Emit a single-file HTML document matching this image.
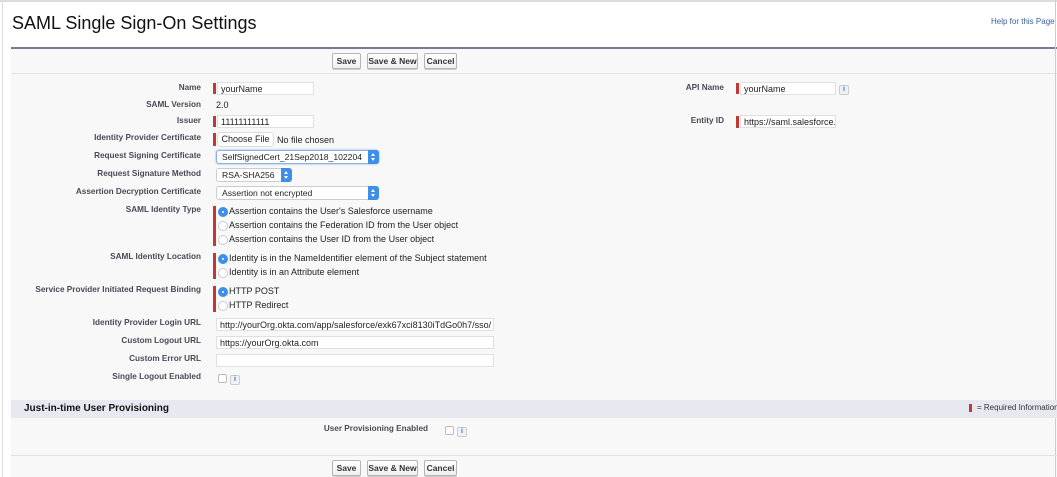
<!DOCTYPE html>
<html><head><meta charset="utf-8"><style>
*{box-sizing:border-box;margin:0;padding:0}
body{width:1057px;height:477px;position:relative;overflow:hidden;background:#fff;font-family:"Liberation Sans",Arial,sans-serif;color:#222}
.a{position:absolute}
.lbl{position:absolute;right:856px;font-size:8.2px;font-weight:bold;color:#4a4a56;white-space:nowrap;text-align:right}
.val{position:absolute;font-size:9px;color:#222;white-space:nowrap}
.inp{position:absolute;height:13px;background:#fff;border:1px solid #e0e0e0;font-size:9px;padding:1px 3px;line-height:10px;white-space:nowrap;overflow:hidden}
.req{position:absolute;width:3px;background:#c23934}
.btn{position:absolute;height:16px;border:1px solid #b5b5b5;border-radius:2px;background:linear-gradient(#fff,#f0f0f0);font-size:8.5px;font-weight:bold;color:#333;text-align:center;line-height:14px;box-shadow:0 1px 0 #ccc}
.sel{position:absolute;height:14px;background:#fff;border:1px solid #ccc;border-radius:3px;font-size:8.6px;padding:0 5px;line-height:12px;white-space:nowrap;overflow:visible}
.sel i{position:absolute;right:-1px;top:-1px;width:11px;height:14px;background:#3d8fe9;border-radius:0 3px 3px 0}
.sel i:before{content:"";position:absolute;left:3px;top:3px;border-left:2.5px solid transparent;border-right:2.5px solid transparent;border-bottom:3px solid #fff}
.sel i:after{content:"";position:absolute;left:3px;top:8px;border-left:2.5px solid transparent;border-right:2.5px solid transparent;border-top:3px solid #fff}
.rad{position:absolute;width:10px;height:10px;border-radius:50%;border:1px solid #ccc;background:#fff}
.rad.on{background:#3d8fe9;border-color:#3d8fe9}
.rad.on:after{content:"";position:absolute;left:3px;top:3px;width:2px;height:2px;border-radius:50%;background:#fff}
.rt{position:absolute;font-size:9px;color:#222;white-space:nowrap}
.cb{position:absolute;width:9px;height:9px;border:1px solid #bbb;border-radius:2px;background:#fff}
.info{position:absolute;width:10px;height:10px;border:1px solid #ccc;border-radius:2px;background:#eef2f8;font-size:7px;color:#3a6fb0;text-align:center;line-height:8px;font-weight:bold}
</style></head><body>
<div class="a" style="left:0;top:0;width:1057px;height:2px;background:#ddd"></div>
<div class="a" style="left:2px;top:0;width:1px;height:477px;background:#ddd"></div>
<div class="a" style="left:12px;top:13px;font-size:18px;color:#111">SAML Single Sign-On Settings</div>
<div class="a" style="left:991px;top:17px;font-size:8px;color:#3a5f9e">Help for this Page</div>
<div class="a" style="left:11px;top:47px;width:1046px;height:430px;background:#f8f8f8;border-top:2px solid #7a7a96"></div>
<div class="a" style="left:11px;top:73px;width:1046px;height:1px;background:#e2e2e2"></div>
<div class="a" style="left:1055px;top:0;width:1px;height:477px;background:#ccc"></div>
<div class="btn" style="left:332px;top:53px;width:29px">Save</div>
<div class="btn" style="left:367px;top:53px;width:51px">Save &amp; New</div>
<div class="btn" style="left:424px;top:53px;width:33px">Cancel</div>

<div class="lbl" style="top:83px">Name</div>
<div class="req" style="left:213px;top:83px;height:11px"></div><div class="inp" style="left:217px;top:82px;width:97px">yourName</div>
<div class="lbl" style="top:100px">SAML Version</div><div class="val" style="left:216px;top:100px">2.0</div>
<div class="lbl" style="top:116px">Issuer</div>
<div class="req" style="left:213px;top:116px;height:11px"></div><div class="inp" style="left:217px;top:115px;width:97px">11111111111</div>
<div class="lbl" style="top:133px">Identity Provider Certificate</div>
<div class="req" style="left:213px;top:133px;height:13px"></div>
<div class="a" style="left:217px;top:132px;width:57px;height:15px;background:#fff;border:1px solid #ddd;border-radius:3px;font-size:9px;line-height:13px;text-align:center">Choose File</div>
<div class="val" style="left:277px;top:135px">No file chosen</div>
<div class="lbl" style="top:151px">Request Signing Certificate</div>
<div class="sel" style="left:216px;top:150px;width:163px;border-color:#8ab0e6;box-shadow:0 0 2px #8ab0e6">SelfSignedCert_21Sep2018_102204<i></i></div>
<div class="lbl" style="top:169px">Request Signature Method</div>
<div class="sel" style="left:216px;top:168px;width:76px">RSA-SHA256<i></i></div>
<div class="lbl" style="top:187px">Assertion Decryption Certificate</div>
<div class="sel" style="left:216px;top:186px;width:163px">Assertion not encrypted<i></i></div>

<div class="lbl" style="top:205px">SAML Identity Type</div>
<div class="req" style="left:213px;top:206px;height:40px"></div>
<div class="rad on" style="left:218px;top:207px"></div><div class="rt" style="left:229px;top:206px">Assertion contains the User's Salesforce username</div>
<div class="rad" style="left:218px;top:221px"></div><div class="rt" style="left:229px;top:220px">Assertion contains the Federation ID from the User object</div>
<div class="rad" style="left:218px;top:235px"></div><div class="rt" style="left:229px;top:234px">Assertion contains the User ID from the User object</div>
<div class="lbl" style="top:252px">SAML Identity Location</div>
<div class="req" style="left:213px;top:253px;height:26px"></div>
<div class="rad on" style="left:218px;top:254px"></div><div class="rt" style="left:229px;top:253px">Identity is in the NameIdentifier element of the Subject statement</div>
<div class="rad" style="left:218px;top:268px"></div><div class="rt" style="left:229px;top:267px">Identity is in an Attribute element</div>
<div class="lbl" style="top:285px">Service Provider Initiated Request Binding</div>
<div class="req" style="left:213px;top:286px;height:26px"></div>
<div class="rad on" style="left:218px;top:287px"></div><div class="rt" style="left:229px;top:286px">HTTP POST</div>
<div class="rad" style="left:218px;top:301px"></div><div class="rt" style="left:229px;top:300px">HTTP Redirect</div>

<div class="lbl" style="top:318px">Identity Provider Login URL</div>
<div class="inp" style="left:216px;top:318px;width:278px">http://yourOrg.okta.com/app/salesforce/exk67xci8130iTdGo0h7/sso/</div>
<div class="lbl" style="top:336px">Custom Logout URL</div>
<div class="inp" style="left:216px;top:336px;width:278px">https://yourOrg.okta.com</div>
<div class="lbl" style="top:354px">Custom Error URL</div>
<div class="inp" style="left:216px;top:354px;width:278px"></div>
<div class="lbl" style="top:372px">Single Logout Enabled</div>
<div class="cb" style="left:218px;top:374px"></div><div class="info" style="left:230px;top:375px">i</div>

<div class="lbl" style="left:600px;right:auto;width:124px;top:83px">API Name</div>
<div class="req" style="left:736px;top:83px;height:11px"></div><div class="inp" style="left:740px;top:82px;width:96px">yourName</div>
<div class="info" style="left:839px;top:85px">i</div>
<div class="lbl" style="left:600px;right:auto;width:124px;top:116px">Entity ID</div>
<div class="req" style="left:736px;top:116px;height:12px"></div><div class="inp" style="left:740px;top:115px;width:96px">https://saml.salesforce.c</div>

<div class="a" style="left:11px;top:400px;width:1046px;height:17px;background:#e8e9f0"></div>
<div class="a" style="left:24px;top:403px;font-size:10px;font-weight:bold;color:#111">Just-in-time User Provisioning</div>
<div class="req" style="left:969px;top:404px;height:8px"></div>
<div class="a" style="left:977px;top:403px;font-size:8px;color:#333;white-space:nowrap">= Required Information</div>
<div class="a" style="left:11px;top:417px;width:1046px;height:1px;background:#e8e8e8"></div>
<div class="lbl" style="right:629px;top:424px">User Provisioning Enabled</div>
<div class="cb" style="left:445px;top:426px"></div><div class="info" style="left:457px;top:427px">i</div>
<div class="a" style="left:11px;top:455px;width:1046px;height:1px;background:#e2e2e2"></div>
<div class="btn" style="left:332px;top:460px;width:29px">Save</div>
<div class="btn" style="left:367px;top:460px;width:51px">Save &amp; New</div>
<div class="btn" style="left:424px;top:460px;width:33px">Cancel</div>
</body></html>
